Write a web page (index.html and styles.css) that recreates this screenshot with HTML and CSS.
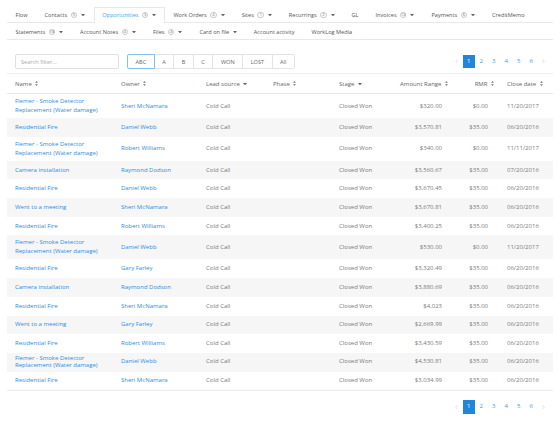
FILE: index.html
```
<!DOCTYPE html>
<html lang="en">
<head>
  <meta charset="UTF-8" />
  <title>Opportunities</title>
  <meta name="viewport" content="width=device-width, initial-scale=1" />
  <link rel="stylesheet" href="styles.css">
</head>
<body>
  <svg width="0" height="0" style="position:absolute">
    <symbol id="i-sort" viewBox="0 0 4 7"><path d="M2 0L4 2.6H0zM2 7L0 4.4H4z"/></symbol>
    <symbol id="i-caret" viewBox="0 0 5 3"><path d="M0 0H5L2.5 3z"/></symbol>
    <symbol id="i-prev" viewBox="0 0 4 6"><path d="M3.2 0.5L1 3l2.2 2.5" fill="none" stroke="currentColor" stroke-width="0.8"/></symbol>
    <symbol id="i-next" viewBox="0 0 4 6"><path d="M0.8 0.5L3 3 0.8 5.5" fill="none" stroke="currentColor" stroke-width="0.8"/></symbol>
  </svg>

  <div class="page">
    <nav class="tabs tabs-main">
      <div class="tab">Flow</div>
      <div class="tab">Contacts<span class="badge">5</span><svg class="caret"><use href="#i-caret"/></svg></div>
      <div class="tab active">Opportunities<span class="badge">3</span><svg class="caret"><use href="#i-caret"/></svg></div>
      <div class="tab">Work Orders<span class="badge">4</span><svg class="caret"><use href="#i-caret"/></svg></div>
      <div class="tab">Sites<span class="badge">1</span><svg class="caret"><use href="#i-caret"/></svg></div>
      <div class="tab">Recurrings<span class="badge">2</span><svg class="caret"><use href="#i-caret"/></svg></div>
      <div class="tab">GL</div>
      <div class="tab">Invoices<span class="badge">12</span><svg class="caret"><use href="#i-caret"/></svg></div>
      <div class="tab">Payments<span class="badge">6</span><svg class="caret"><use href="#i-caret"/></svg></div>
      <div class="tab">CreditMemo</div>
    </nav>
    <nav class="tabs tabs-sub">
      <div class="tab">Statements<span class="badge">18</span><svg class="caret"><use href="#i-caret"/></svg></div>
      <div class="tab">Account Notes<span class="badge">4</span><svg class="caret"><use href="#i-caret"/></svg></div>
      <div class="tab">Files<span class="badge">4</span><svg class="caret"><use href="#i-caret"/></svg></div>
      <div class="tab">Card on file<svg class="caret solo"><use href="#i-caret"/></svg></div>
      <div class="tab">Account activity</div>
      <div class="tab">WorkLog Media</div>
    </nav>

    <div class="toolbar">
      <input class="search" type="text" placeholder="Search filter...">
      <div class="letters">
        <button class="selected">ABC</button>
        <button>A</button>
        <button>B</button>
        <button>C</button>
        <button>WON</button>
        <button>LOST</button>
        <button>All</button>
      </div>
      <div class="pager">
        <span class="arrow"><svg><use href="#i-prev"/></svg></span>
        <span class="on">1</span><span>2</span><span>3</span><span>4</span><span>5</span><span>6</span>
        <span class="arrow"><svg><use href="#i-next"/></svg></span>
      </div>
    </div>

    <table class="grid">
      <colgroup>
        <col style="width:106px"><col style="width:85px"><col style="width:67px"><col style="width:66px">
        <col style="width:54px"><col style="width:65px"><col style="width:49px"><col style="width:54px">
      </colgroup>
      <thead>
        <tr>
          <th>Name <svg class="sort"><use href="#i-sort"/></svg></th>
          <th>Owner <svg class="sort"><use href="#i-sort"/></svg></th>
          <th>Lead source <svg class="caret"><use href="#i-caret"/></svg></th>
          <th>Phase <svg class="sort"><use href="#i-sort"/></svg></th>
          <th>Stage <svg class="caret"><use href="#i-caret"/></svg></th>
          <th class="amount">Amount Range <svg class="sort"><use href="#i-sort"/></svg></th>
          <th class="rmr">RMR <svg class="sort"><use href="#i-sort"/></svg></th>
          <th>Close date <svg class="sort"><use href="#i-sort"/></svg></th>
        </tr>
      </thead>
      <tbody>
        <tr><td><a href="#">Flemer - Smoke Detector Replacement (Water damage)</a></td><td><a href="#">Sheri McNamara</a></td><td>Cold Call</td><td></td><td>Closed Won</td><td class="amount">$320.00</td><td class="rmr">$0.00</td><td>11/20/2017</td></tr>
        <tr><td><a href="#">Residential Fire</a></td><td><a href="#">Daniel Webb</a></td><td>Cold Call</td><td></td><td>Closed Won</td><td class="amount">$3,570.81</td><td class="rmr">$35.00</td><td>06/20/2016</td></tr>
        <tr><td><a href="#">Flemer - Smoke Detector Replacement (Water damage)</a></td><td><a href="#">Robert Williams</a></td><td>Cold Call</td><td></td><td>Closed Won</td><td class="amount">$340.00</td><td class="rmr">$0.00</td><td>11/11/2017</td></tr>
        <tr><td><a href="#">Camera installation</a></td><td><a href="#">Raymond Dodson</a></td><td>Cold Call</td><td></td><td>Closed Won</td><td class="amount">$3,560.67</td><td class="rmr">$35.00</td><td>07/20/2016</td></tr>
        <tr><td><a href="#">Residential Fire</a></td><td><a href="#">Daniel Webb</a></td><td>Cold Call</td><td></td><td>Closed Won</td><td class="amount">$3,670.45</td><td class="rmr">$35.00</td><td>06/20/2016</td></tr>
        <tr><td><a href="#">Went to a meeting</a></td><td><a href="#">Sheri McNamara</a></td><td>Cold Call</td><td></td><td>Closed Won</td><td class="amount">$3,670.81</td><td class="rmr">$35.00</td><td>06/20/2016</td></tr>
        <tr><td><a href="#">Residential Fire</a></td><td><a href="#">Robert Williams</a></td><td>Cold Call</td><td></td><td>Closed Won</td><td class="amount">$3,400.25</td><td class="rmr">$35.00</td><td>06/20/2016</td></tr>
        <tr><td><a href="#">Flemer - Smoke Detector Replacement (Water damage)</a></td><td><a href="#">Daniel Webb</a></td><td>Cold Call</td><td></td><td>Closed Won</td><td class="amount">$530.00</td><td class="rmr">$0.00</td><td>11/20/2017</td></tr>
        <tr><td><a href="#">Residential Fire</a></td><td><a href="#">Gary Farley</a></td><td>Cold Call</td><td></td><td>Closed Won</td><td class="amount">$3,320.49</td><td class="rmr">$35.00</td><td>06/20/2016</td></tr>
        <tr><td><a href="#">Camera installation</a></td><td><a href="#">Raymond Dodson</a></td><td>Cold Call</td><td></td><td>Closed Won</td><td class="amount">$3,880.69</td><td class="rmr">$35.00</td><td>06/20/2016</td></tr>
        <tr><td><a href="#">Residential Fire</a></td><td><a href="#">Sheri McNamara</a></td><td>Cold Call</td><td></td><td>Closed Won</td><td class="amount">$4,023</td><td class="rmr">$35.00</td><td>06/20/2016</td></tr>
        <tr><td><a href="#">Went to a meeting</a></td><td><a href="#">Gary Farley</a></td><td>Cold Call</td><td></td><td>Closed Won</td><td class="amount">$2,669.99</td><td class="rmr">$35.00</td><td>06/20/2016</td></tr>
        <tr><td><a href="#">Residential Fire</a></td><td><a href="#">Robert Williams</a></td><td>Cold Call</td><td></td><td>Closed Won</td><td class="amount">$3,430.59</td><td class="rmr">$35.00</td><td>06/20/2016</td></tr>
        <tr class="tight"><td><a href="#">Flemer - Smoke Detector Replacement (Water damage)</a></td><td><a href="#">Daniel Webb</a></td><td>Cold Call</td><td></td><td>Closed Won</td><td class="amount">$4,530.81</td><td class="rmr">$35.00</td><td>06/20/2016</td></tr>
        <tr><td><a href="#">Residential Fire</a></td><td><a href="#">Sheri McNamara</a></td><td>Cold Call</td><td></td><td>Closed Won</td><td class="amount">$3,034.99</td><td class="rmr">$35.00</td><td>06/20/2016</td></tr>
      </tbody>
    </table>

    <div class="footer">
      <div class="pager">
        <span class="arrow"><svg><use href="#i-prev"/></svg></span>
        <span class="on">1</span><span>2</span><span>3</span><span>4</span><span>5</span><span>6</span>
        <span class="arrow"><svg><use href="#i-next"/></svg></span>
      </div>
    </div>
  </div>
</body>
</html>
```
FILE: styles.css
```
body {
  margin: 0;
  font-family: "Open Sans", "Liberation Sans", sans-serif;
  color: #7a7a7a;
  background: #fff;
}
a {
  color: #2e8de2;
  text-decoration: none;
}
.page {
  margin: 0 7px;
}

/* tabs */
.tabs {
  display: flex;
  border-bottom: 1px solid #e8e8e8;
  font-size: 5.6px;
  line-height: 14px;
  color: #555;
}
.tabs-main {
  padding-top: 7px;
}
.tabs-sub {
  padding-top: 1px;
}
.tab {
  display: flex;
  align-items: center;
  padding: 0 7.5px;
  border: 1px solid transparent;
  border-bottom: 0;
  white-space: nowrap;
}
.tab.active {
  background: #fff;
  border-color: #e8e8e8;
  margin-bottom: -1px;
  padding-bottom: 1px;
  color: #3aa6ea;
}
.badge {
  display: inline-flex;
  align-items: center;
  justify-content: center;
  box-sizing: border-box;
  width: 6.4px;
  height: 6.4px;
  margin: 0 4px 0 3.5px;
  border: 0.6px solid #c8c8c8;
  border-radius: 50%;
  font-size: 4.2px;
  line-height: 1;
  color: #777;
}
.caret {
  width: 4px;
  height: 2.4px;
  fill: #666;
}
.caret.solo {
  margin-left: 3.5px;
}

/* toolbar */
.toolbar {
  display: flex;
  align-items: center;
  padding: 14px 0 4px 8px;
  border-bottom: 1px solid #efefef;
}
.search {
  box-sizing: border-box;
  width: 104px;
  height: 15px;
  margin: 0;
  padding: 0 5px;
  border: 1px solid #e0e0e0;
  border-radius: 2px;
  font-family: inherit;
  font-size: 5.6px;
  color: #555;
  outline: none;
}
.search::placeholder {
  color: #aaa;
}
.letters {
  display: flex;
  margin-left: 9px;
}
.letters button {
  height: 15px;
  margin: 0 0 0 -1px;
  padding: 0 7.5px;
  border: 1px solid #e3e3e3;
  background: #fff;
  font-family: inherit;
  font-size: 5.6px;
  color: #666;
}
.letters button:first-child {
  border-radius: 2px 0 0 2px;
}
.letters button:last-child {
  border-radius: 0 2px 2px 0;
}
.letters button.selected {
  position: relative;
  border-color: #86c0ea;
}

/* pagination */
.pager {
  display: flex;
  margin-left: auto;
  margin-right: 3px;
  font-size: 6px;
}
.pager span {
  width: 12.5px;
  height: 13.5px;
  line-height: 13.5px;
  text-align: center;
  color: #3b9be6;
}
.pager span.on {
  background: #1f86de;
  color: #fff;
}
.pager .arrow {
  display: flex;
  align-items: center;
  justify-content: center;
  color: #a7d0f2;
}
.pager .arrow svg {
  width: 3px;
  height: 4.5px;
}
.footer {
  display: flex;
  padding-top: 9.5px;
}

/* table */
.grid {
  width: 100%;
  border-collapse: collapse;
  table-layout: fixed;
  font-size: 6px;
}
.grid th {
  height: 19px;
  padding: 0 8px;
  border-bottom: 1px solid #e8e8e8;
  font-weight: normal;
  text-align: left;
  color: #666;
  white-space: nowrap;
}
.grid td {
  padding: 3px 8px;
  line-height: 9px;
  vertical-align: middle;
}
.grid tbody tr {
  height: 18.7px;
}
.grid tbody tr:nth-child(even) {
  background: #f6f6f6;
}
.grid tbody tr:last-child {
  border-bottom: 1px solid #ececec;
}
.grid tr.tight td {
  padding-top: 1.5px;
  padding-bottom: 1.5px;
  line-height: 7.7px;
}
.grid .amount {
  text-align: right;
}
.grid th.amount {
  padding-right: 2px;
}
.grid .rmr {
  text-align: right;
  padding-right: 11px;
}
.grid th.rmr {
  padding-right: 5px;
}
.sort {
  width: 3px;
  height: 5px;
  margin-left: 2px;
  fill: #777;
}
.grid th .caret {
  margin-left: 2px;
  vertical-align: middle;
}
```
